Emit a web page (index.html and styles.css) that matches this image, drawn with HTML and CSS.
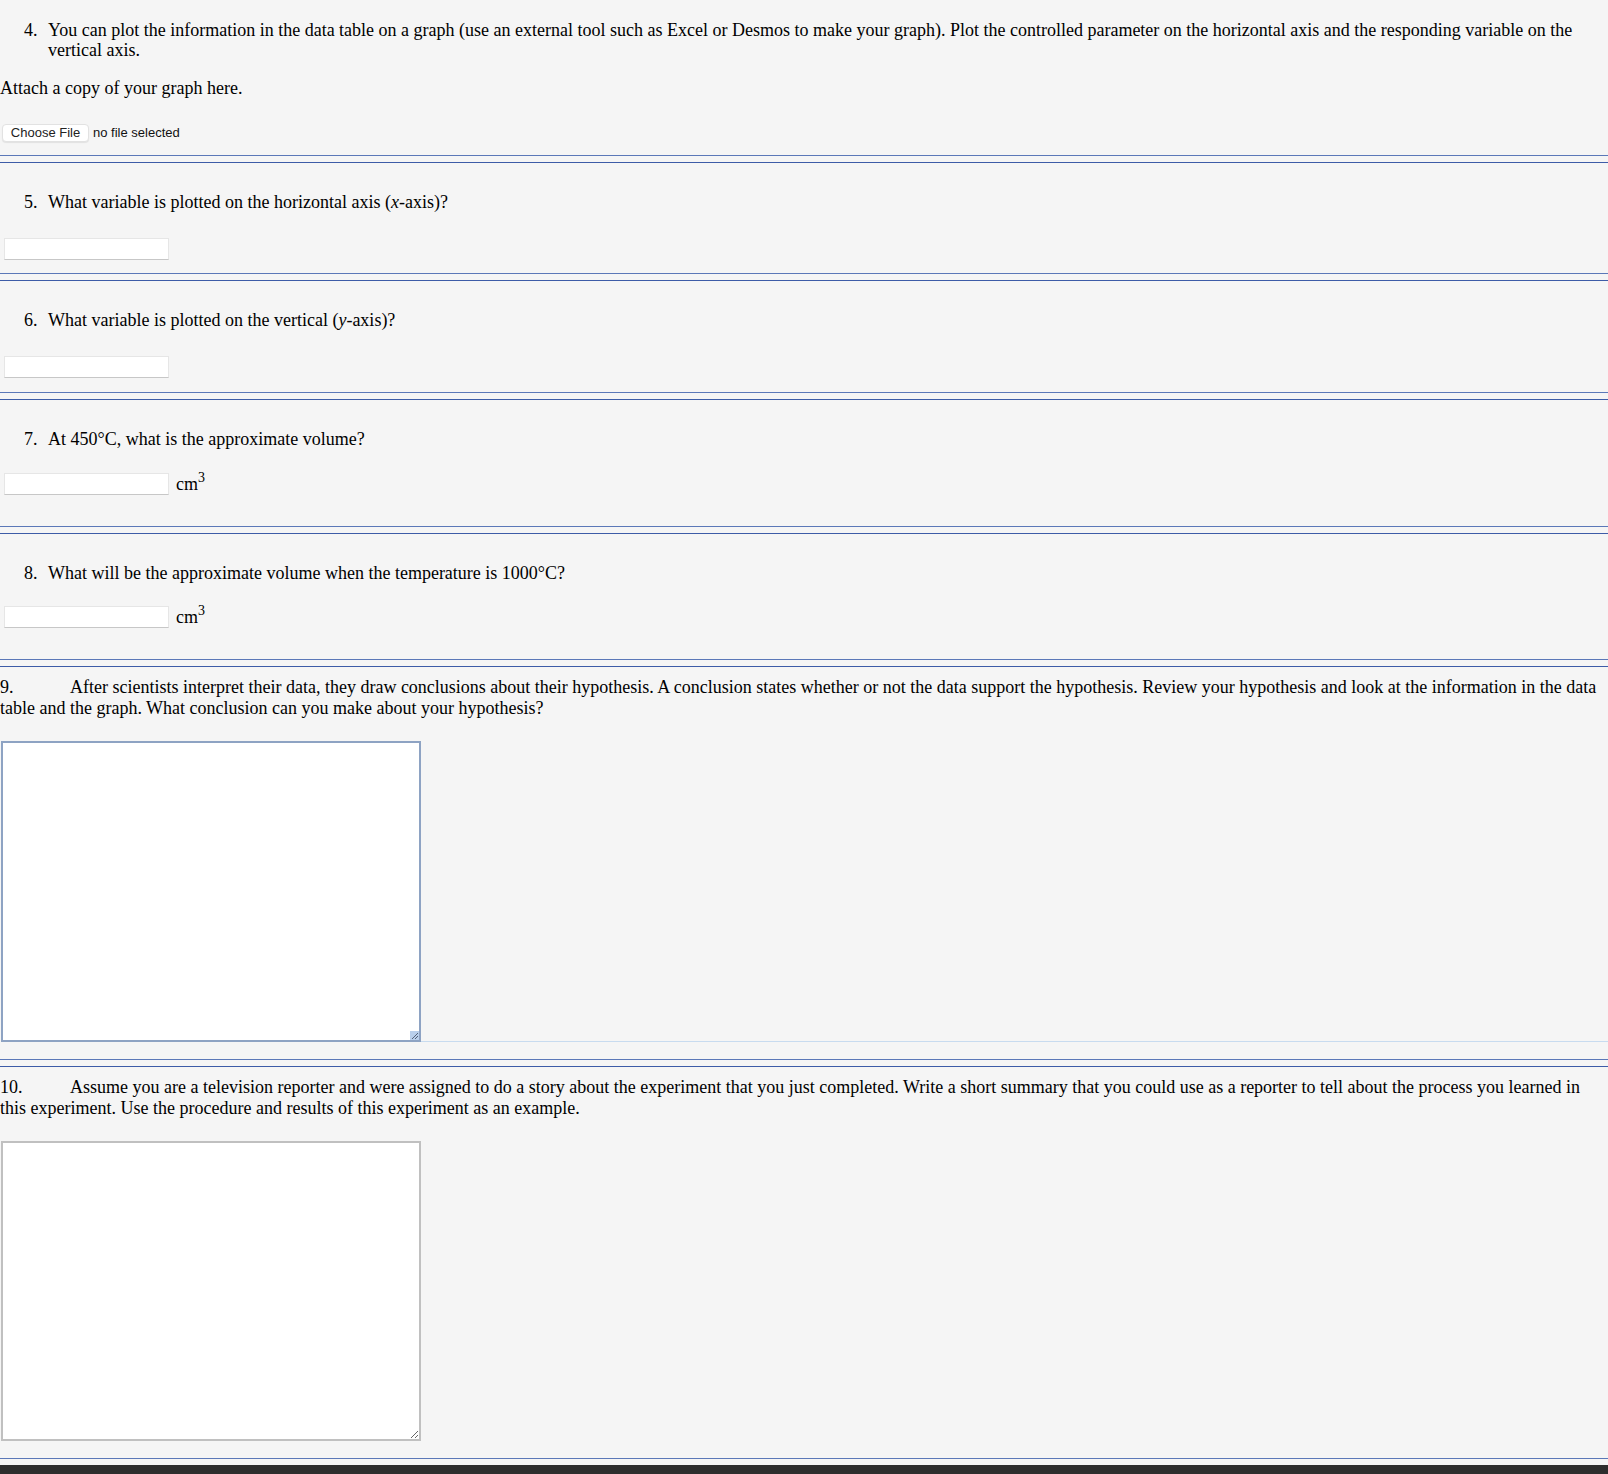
FILE: index.html
```html
<!DOCTYPE html>
<html lang="en">
<head>
<meta charset="utf-8">
<title>Lab Questions</title>
<link rel="stylesheet" href="styles.css">
</head>
<body>
<main class="page">
  <section class="block block-first">
    <ol class="qlist" start="4">
      <li>You can plot the information in the data table on a graph (use an external tool such as Excel or Desmos to make your graph). Plot the controlled parameter on the horizontal axis and the responding variable on the vertical axis.</li>
    </ol>
    <p class="note">Attach a copy of your graph here.</p>
    <div class="file-row">
      <span class="file-btn">Choose File</span>
      <span class="file-status">no file selected</span>
    </div>
  </section>
  <div class="sep"></div>

  <section class="block block-short">
    <ol class="qlist" start="5">
      <li>What variable is plotted on the horizontal axis (<i>x</i>-axis)?</li>
    </ol>
    <div class="answer"><input class="text-in" type="text"></div>
  </section>
  <div class="sep"></div>

  <section class="block block-short block-c">
    <ol class="qlist" start="6">
      <li>What variable is plotted on the vertical (<i>y</i>-axis)?</li>
    </ol>
    <div class="answer"><input class="text-in" type="text"></div>
  </section>
  <div class="sep"></div>

  <section class="block block-unit">
    <ol class="qlist" start="7">
      <li>At 450°C, what is the approximate volume?</li>
    </ol>
    <div class="answer answer-unit"><input class="text-in" type="text"><span class="unit">cm<sup>3</sup></span></div>
  </section>
  <div class="sep"></div>

  <section class="block block-unit block-e">
    <ol class="qlist" start="8">
      <li>What will be the approximate volume when the temperature is 1000°C?</li>
    </ol>
    <div class="answer answer-unit"><input class="text-in" type="text"><span class="unit">cm<sup>3</sup></span></div>
  </section>
  <div class="sep"></div>

  <section class="block block-long">
    <p class="para">9.&#9;After scientists interpret their data, they draw conclusions about their hypothesis. A conclusion states whether or not the data support the hypothesis. Review your hypothesis and look at the information in the data table and the graph. What conclusion can you make about your hypothesis?</p>
    <div class="area-row">
      <div class="area-wrap">
        <textarea class="area area-active"></textarea>
        <span class="grip"><svg width="9" height="9" viewBox="0 0 9 9"><path d="M8 2 L2 8 M8 5 L5 8" stroke="#55637a" stroke-width="1" fill="none"/></svg></span>
      </div>
      <div class="area-fill"></div>
    </div>
  </section>
  <div class="sep"></div>

  <section class="block block-long block-last">
    <p class="para">10.&#9;Assume you are a television reporter and were assigned to do a story about the experiment that you just completed. Write a short summary that you could use as a reporter to tell about the process you learned in this experiment. Use the procedure and results of this experiment as an example.</p>
    <div class="area-row">
      <textarea class="area area-plain"></textarea>
    </div>
  </section>
  <div class="sep sep-last"></div>
</main>
<div class="footer-bar"></div>
</body>
</html>
```

FILE: styles.css
```css
html, body {
  margin: 0;
  padding: 0;
  background: #f5f5f5;
}

body {
  font-family: "Liberation Serif", "Times New Roman", serif;
  font-size: 18px;
  line-height: 20px;
  color: #000;
  overflow: hidden;
}

.page {
  display: block;
}

.block {
  padding: 29px 0 13px;
}

.block-first {
  padding: 20px 0 13px;
}

.block-c {
  padding-bottom: 14px;
}

.block-unit {
  padding-bottom: 31px;
}

.block-unit .answer {
  margin-top: 24px;
}

.block-e .answer {
  margin-top: 23px;
}

.block-long {
  padding: 10px 0 17px;
}

.qlist {
  margin: 0;
  padding: 0 0 0 48px;
  list-style: none;
}

.qlist li::before {
  content: counter(list-item) ".";
  display: inline-block;
  width: 24px;
  margin-left: -24px;
}

.note {
  margin: 18px 0 0;
}

.file-row {
  margin: 26px 0 0 2px;
  height: 18px;
  display: flex;
  align-items: center;
  gap: 4px;
  font-family: "Liberation Sans", Arial, sans-serif;
  font-size: 13px;
  line-height: 16px;
  color: #111;
}

.file-btn {
  box-sizing: border-box;
  height: 18px;
  width: 87px;
  display: flex;
  align-items: center;
  justify-content: center;
  background: #fff;
  border: 1px solid #e2e2e2;
  border-radius: 4px;
  box-shadow: 0 1px 1px rgba(0, 0, 0, 0.08);
  color: #222;
}

.file-status {
  color: #111;
}

.sep {
  height: 6px;
  border-top: 1px solid #5b78b8;
  border-bottom: 1px solid #3d5ca7;
}

.sep-last {
  border-bottom: 0;
}

.answer {
  margin-top: 26px;
  height: 22px;
  display: flex;
  align-items: center;
}

.text-in {
  box-sizing: border-box;
  display: block;
  width: 165px;
  height: 22px;
  margin: 0 0 0 4px;
  padding: 0 3px;
  border: 1px solid #e6e6e6;
  border-bottom-color: #c7c7c7;
  background: #fff;
  outline: none;
  font: inherit;
}

.unit {
  margin-left: 7px;
  line-height: 20px;
}

.unit sup {
  font-size: 14px;
  vertical-align: 8px;
  line-height: 0;
}

.para {
  margin: 0;
  line-height: 21px;
  white-space: pre-wrap;
  tab-size: 70px;
}

.area-row {
  margin-top: 22px;
  display: flex;
  align-items: flex-end;
}

.area-wrap {
  position: relative;
  flex: none;
}

.area {
  display: block;
  box-sizing: border-box;
  width: 420px;
  height: 300px;
  margin: 0 0 0 1px;
  padding: 2px;
  background: #fff;
  resize: both;
  font: inherit;
  outline: none;
}

.area-active {
  height: 301px;
  border: 2px solid #8ea3c3;
}

.area-plain {
  border: 2px solid #c0c0c0;
}

.grip {
  position: absolute;
  right: 2px;
  bottom: 2px;
  width: 9px;
  height: 9px;
  background: #b9cfeb;
  display: block;
}

.grip svg {
  display: block;
}

.area-fill {
  flex: 1;
  height: 0;
  border-bottom: 1px solid #c8dbef;
}

.footer-bar {
  height: 9px;
  background: #2d2d2d;
}
```
